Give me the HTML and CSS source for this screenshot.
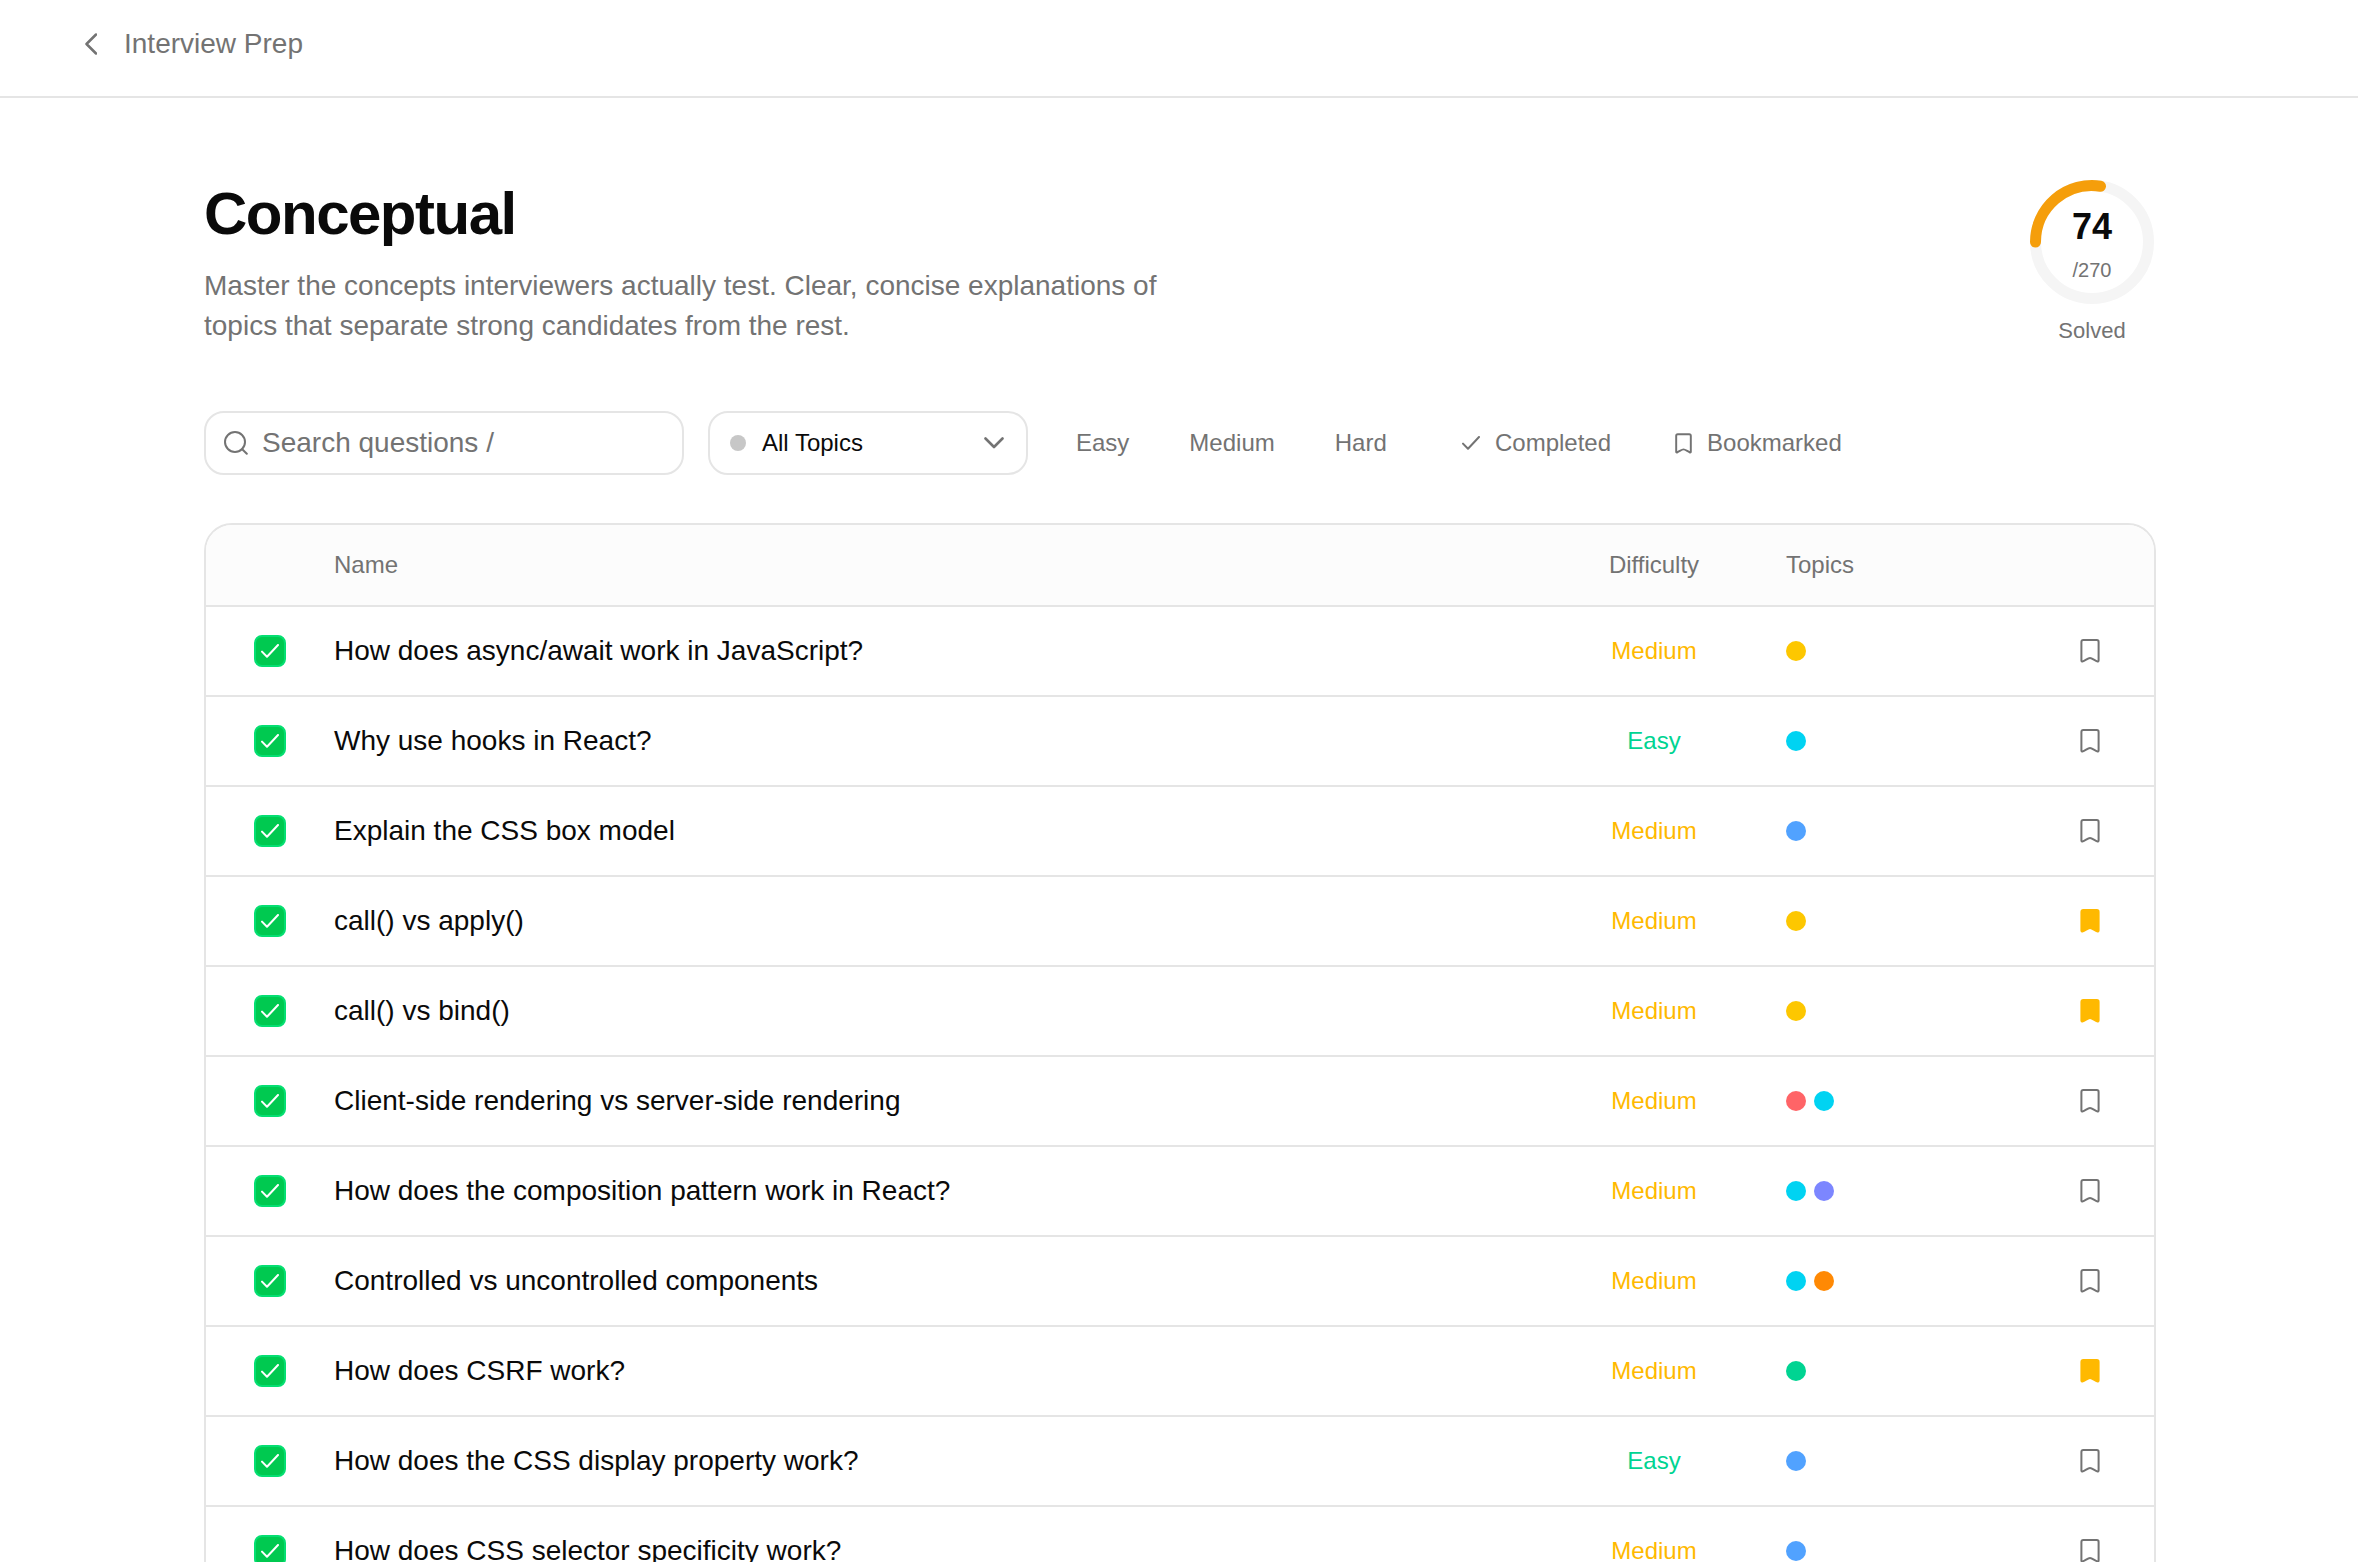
FILE: index.html
```html
<!DOCTYPE html>
<html lang="en">
<head>
<meta charset="utf-8">
<title>Conceptual – Interview Prep</title>
<link rel="stylesheet" href="styles.css">
</head>
<body>
<svg class="sprite" aria-hidden="true">
  <symbol id="bookmark" viewBox="0 0 20 24"><path d="M3.2 1.1H16.8Q18.6 1.1 18.6 2.9V21.6Q18.6 22.9 17.2 22.3C14.8 21.3 11.9 18.9 10 18.9S5.2 21.3 2.8 22.3Q1.4 22.9 1.4 21.6V2.9Q1.4 1.1 3.2 1.1Z"/></symbol>
  <symbol id="check" viewBox="0 0 18 14"><path d="M1 7.6L6 12.8L17 1"/></symbol>
</svg>
<header class="topbar">
  <a class="back"><svg class="back-icon" viewBox="0 0 12 22"><path d="M11 1.5L1.5 11L11 20.5"/></svg><span>Interview Prep</span></a>
</header>
<main class="page">
  <section class="intro">
    <div>
      <h1 class="title">Conceptual</h1>
      <p class="lead">Master the concepts interviewers actually test. Clear, concise explanations of topics that separate strong candidates from the rest.</p>
    </div>
    <div class="progress">
      <div class="ring">
        <svg class="ring-svg" viewBox="0 0 124 124"><circle class="ring-track" cx="62" cy="62" r="56.5"/><path class="ring-value" d="M5.5 62A56.5 56.5 0 0 1 70.5 6.2"/></svg>
        <div class="ring-label"><strong class="ring-count">74</strong><span class="ring-total">/270</span></div>
      </div>
      <span class="progress-caption">Solved</span>
    </div>
  </section>
  <section class="filters">
    <div class="search"><svg class="search-icon" viewBox="0 0 24 24"><circle cx="11" cy="11" r="10"/><path d="M18.2 18.2L22.8 22.8"/></svg><span>Search questions /</span></div>
    <div class="select"><i class="select-dot"></i><span>All Topics</span><svg class="chevron" viewBox="0 0 20 12"><path d="M1.5 1.5L10 10L18.5 1.5"/></svg></div>
    <div class="levels"><span>Easy</span><span>Medium</span><span>Hard</span></div>
    <span class="toggle"><svg class="toggle-check"><use href="#check"/></svg>Completed</span>
    <span class="toggle toggle-saved"><svg class="toggle-bookmark"><use href="#bookmark"/></svg>Bookmarked</span>
  </section>
  <section class="table">
    <div class="row head"><span></span><span>Name</span><span class="level">Difficulty</span><span class="topics">Topics</span><span></span></div>
    <div class="row"><span class="box"><svg class="tick"><use href="#check"/></svg></span><span class="name">How does async/await work in JavaScript?</span><span class="level medium">Medium</span><span class="topics"><i class="dot js"></i></span><svg class="mark"><use href="#bookmark"/></svg></div>
    <div class="row"><span class="box"><svg class="tick"><use href="#check"/></svg></span><span class="name">Why use hooks in React?</span><span class="level easy">Easy</span><span class="topics"><i class="dot react"></i></span><svg class="mark"><use href="#bookmark"/></svg></div>
    <div class="row"><span class="box"><svg class="tick"><use href="#check"/></svg></span><span class="name">Explain the CSS box model</span><span class="level medium">Medium</span><span class="topics"><i class="dot css"></i></span><svg class="mark"><use href="#bookmark"/></svg></div>
    <div class="row"><span class="box"><svg class="tick"><use href="#check"/></svg></span><span class="name">call() vs apply()</span><span class="level medium">Medium</span><span class="topics"><i class="dot js"></i></span><svg class="mark saved"><use href="#bookmark"/></svg></div>
    <div class="row"><span class="box"><svg class="tick"><use href="#check"/></svg></span><span class="name">call() vs bind()</span><span class="level medium">Medium</span><span class="topics"><i class="dot js"></i></span><svg class="mark saved"><use href="#bookmark"/></svg></div>
    <div class="row"><span class="box"><svg class="tick"><use href="#check"/></svg></span><span class="name">Client-side rendering vs server-side rendering</span><span class="level medium">Medium</span><span class="topics"><i class="dot perf"></i><i class="dot react"></i></span><svg class="mark"><use href="#bookmark"/></svg></div>
    <div class="row"><span class="box"><svg class="tick"><use href="#check"/></svg></span><span class="name">How does the composition pattern work in React?</span><span class="level medium">Medium</span><span class="topics"><i class="dot react"></i><i class="dot patterns"></i></span><svg class="mark"><use href="#bookmark"/></svg></div>
    <div class="row"><span class="box"><svg class="tick"><use href="#check"/></svg></span><span class="name">Controlled vs uncontrolled components</span><span class="level medium">Medium</span><span class="topics"><i class="dot react"></i><i class="dot forms"></i></span><svg class="mark"><use href="#bookmark"/></svg></div>
    <div class="row"><span class="box"><svg class="tick"><use href="#check"/></svg></span><span class="name">How does CSRF work?</span><span class="level medium">Medium</span><span class="topics"><i class="dot security"></i></span><svg class="mark saved"><use href="#bookmark"/></svg></div>
    <div class="row"><span class="box"><svg class="tick"><use href="#check"/></svg></span><span class="name">How does the CSS display property work?</span><span class="level easy">Easy</span><span class="topics"><i class="dot css"></i></span><svg class="mark"><use href="#bookmark"/></svg></div>
    <div class="row"><span class="box"><svg class="tick"><use href="#check"/></svg></span><span class="name">How does CSS selector specificity work?</span><span class="level medium">Medium</span><span class="topics"><i class="dot css"></i></span><svg class="mark"><use href="#bookmark"/></svg></div>
  </section>
</main>
</body>
</html>
```
FILE: styles.css
```css
* { box-sizing: border-box; }
html, body { height: 100%; overflow: hidden; }
body { margin: 0; background: #fff; color: #0a0a0a; font-family: "Liberation Sans", Arial, sans-serif; font-size: 24px; line-height: 32px; }
svg { display: block; flex: none; fill: none; stroke: currentColor; stroke-width: 2; stroke-linecap: round; stroke-linejoin: round; }
.sprite { display: none; }

.topbar { height: 98px; padding: 24px 85px 0; border-bottom: 2px solid #e5e5e5; color: #737373; font-size: 28px; line-height: 40px; }
.back { display: inline-flex; align-items: center; gap: 27px; }
.back-icon { width: 12px; height: 22px; stroke-width: 2.5; }

.page { width: 2156px; padding: 77px 0 0 204px; }
.intro { display: flex; justify-content: space-between; height: 236px; }
.title { margin: 0; padding-top: 3px; font-size: 60px; line-height: 72px; font-weight: 700; letter-spacing: -1.5px; }
.lead { width: 980px; margin: 16px 0 0; color: #737373; font-size: 28px; line-height: 40px; }
.progress { display: flex; flex-direction: column; align-items: center; width: 128px; padding-top: 5px; }
.ring { display: grid; width: 124px; height: 124px; }
.ring-svg, .ring-label { grid-area: 1 / 1; }
.ring-svg { width: 124px; height: 124px; stroke-width: 11; }
.ring-track { stroke: #f5f5f5; }
.ring-value { stroke: #f59e0b; }
.ring-label { display: flex; flex-direction: column; align-items: center; padding-top: 29px; }
.ring-count { font-size: 36px; line-height: 36px; }
.ring-total { margin-top: 10px; color: #737373; font-size: 20px; line-height: 30px; }
.progress-caption { margin-top: 11px; color: #737373; font-size: 22px; line-height: 32px; }

.filters { display: flex; align-items: center; height: 64px; color: #737373; }
.search, .select { display: flex; align-items: center; height: 64px; border: 2px solid #e5e5e5; border-radius: 20px; }
.search { width: 480px; padding-left: 18px; gap: 14px; font-size: 28px; }
.search-icon { width: 24px; height: 24px; }
.select { width: 320px; margin-left: 24px; padding: 0 22px 0 20px; color: #0a0a0a; }
.select-dot { width: 16px; height: 16px; margin-right: 16px; border-radius: 50%; background: #c7c7c7; }
.chevron { width: 20px; height: 12px; margin-left: auto; color: #737373; stroke-width: 2.6; }
.levels { display: flex; gap: 60px; width: 386px; margin-left: 48px; }
.toggle { display: flex; align-items: center; gap: 15px; }
.toggle-check { width: 18px; height: 14px; }
.toggle-saved { margin-left: 64px; }
.toggle-bookmark { width: 17px; height: 21px; stroke-width: 2.3; }

.table { margin-top: 48px; border: 2px solid #e5e5e5; border-radius: 28px; overflow: hidden; }
.row { display: grid; grid-template-columns: 80px 1220px 200px 1fr 20px; align-items: center; height: 90px; padding: 0 54px 0 48px; border-bottom: 2px solid #e5e5e5; }
.head { height: 82px; background: #fcfcfc; color: #737373; }
.name { font-size: 28px; }
.level { text-align: center; }
.medium { color: #ffb900; }
.easy { color: #00d492; }
.box { display: grid; place-items: center; width: 32px; height: 32px; border: 2px solid #05df72; border-radius: 8px; background: #00c950; color: #fff; }
.tick { width: 18px; height: 14px; }
.topics { display: flex; gap: 8px; padding-left: 32px; }
.dot { width: 20px; height: 20px; border-radius: 50%; }
.js { background: #fdc700; }
.react { background: #00d3f2; }
.css { background: #51a2ff; }
.perf { background: #ff6467; }
.patterns { background: #7c86ff; }
.forms { background: #ff8904; }
.security { background: #00d492; }
.mark { width: 20px; height: 24px; color: #737373; }
.saved { color: #ffb900; fill: currentColor; }
```
